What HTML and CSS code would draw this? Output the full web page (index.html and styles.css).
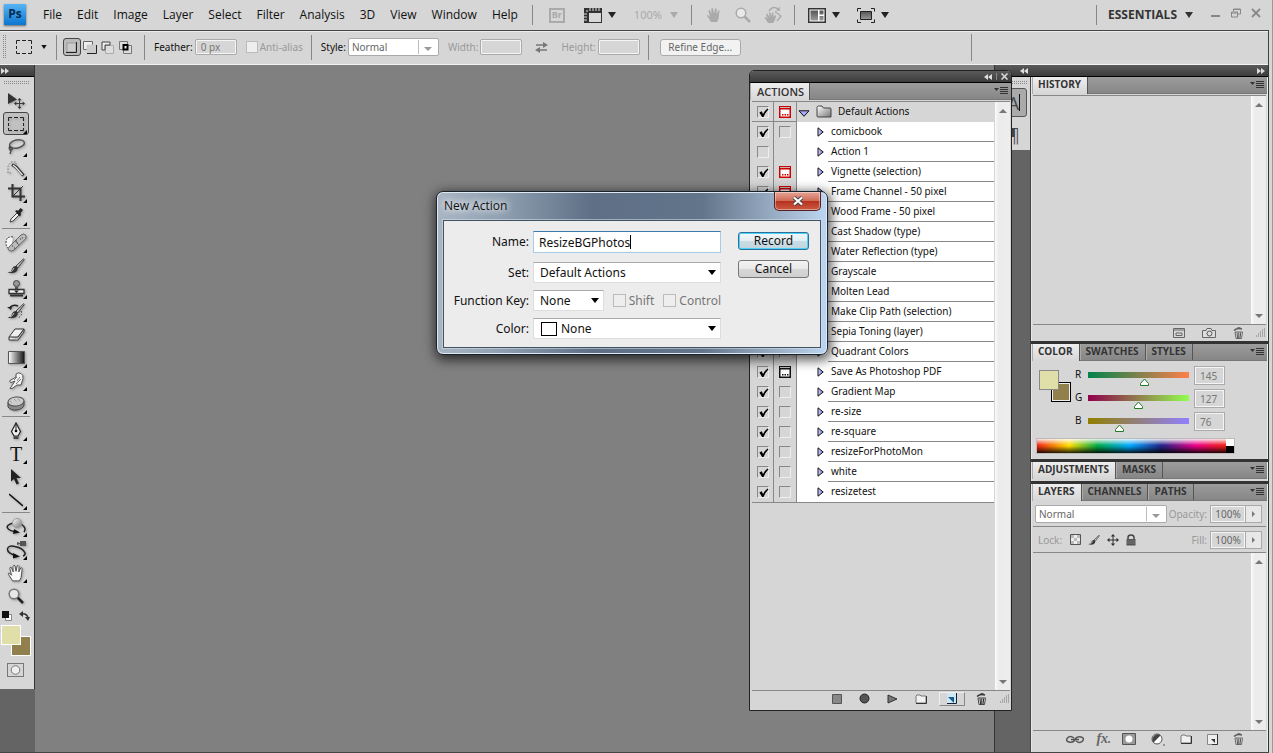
FILE: index.html
```html
<!DOCTYPE html>
<html lang="en">
<head>
<meta charset="utf-8">
<title>Photoshop - New Action</title>
<link rel="stylesheet" href="styles.css">
</head>
<body>
<svg class="defs" aria-hidden="true">
<defs>
<linearGradient id="metal" x1="0" y1="0" x2="1" y2="1"><stop offset="0" stop-color="#fff"/><stop offset="1" stop-color="#777"/></linearGradient>
<linearGradient id="dark" x1="0" y1="0" x2="0" y2="1"><stop offset="0" stop-color="#555"/><stop offset="1" stop-color="#999"/></linearGradient>
<linearGradient id="ramp"><stop offset="0" stop-color="#fff"/><stop offset="1" stop-color="#111"/></linearGradient>
<linearGradient id="violet" x1="0" y1="0" x2="1" y2="0"><stop offset="0" stop-color="#d8d8ff"/><stop offset="1" stop-color="#7070e0"/></linearGradient>
</defs>
<symbol id="caret" viewBox="0 0 8 6"><path d="M0 0h8L4 6z" fill="currentColor"/></symbol>
<symbol id="left2" viewBox="0 0 8 6"><path d="M4 0v6L0 3zM8 0v6L4 3z" fill="#ddd"/></symbol>
<symbol id="right2" viewBox="0 0 8 6"><path d="M0 0v6l4-3zM4 0v6l4-3z" fill="#ddd"/></symbol>
<symbol id="menu" viewBox="0 0 14 8"><path d="M0 1h5L2.500 4z" fill="#333"/><path d="M6 .5h8M6 2.500h8M6 4.500h8M6 6.500h8" stroke="#333"/></symbol>
<symbol id="marquee" viewBox="0 0 16 14"><path d="M.5 4V.5H4M6 .5h4M12 .5h3.500V4M15.500 6v3M15.500 11v2.500H12M10 13.500H6M4 13.500H.5V11M.5 9V6" fill="none" stroke="#222"/></symbol>
<symbol id="check" viewBox="0 0 12 12"><path d="M1.500 6l2.500-1.500 1.500 3Q7 4 10.500 1.500l1 1Q8 6 6 11H4.500z" fill="#000"/></symbol>
<symbol id="dlg" viewBox="0 0 12 12"><path d="M.75.75h10.500v10.500H.75z" fill="#fff" stroke="currentColor" stroke-width="1.500"/><path d="M0 0h12v3.500H0z" fill="currentColor"/><path d="M1 1.500h10" stroke="#bbb"/><path d="M3 8h1.500v1.500H3zM5.500 8H7v1.500H5.500zM8 8h1.500v1.500H8z" fill="currentColor"/></symbol>
<symbol id="tri" viewBox="0 0 7 10"><path d="M1 .8v8.400L6.200 5z" fill="url(#violet)" stroke="#111" stroke-width="1"/></symbol>
<symbol id="tridown" viewBox="0 0 12 7"><path d="M1 .8h10L6 6.300z" fill="#a8a8f8" stroke="#111"/></symbol>
<symbol id="folder" viewBox="0 0 16 13"><path d="M1 11V2.500Q1 1 2.500 1H6l1.500 2H14q1 0 1 1v8H2q-1 0-1-1z" fill="url(#metal)" stroke="#444"/></symbol>
<symbol id="folder2" viewBox="0 0 12 10"><path d="M1 9V2l1-1h3l1 1h5v7z" fill="#f1f1f1" stroke="#777"/><path d="M11.500 2v7.500H1" fill="none" stroke="#333"/></symbol>
<symbol id="bin" viewBox="0 0 11 12"><path d="M1 3.500q3-3 8-1.500" fill="none" stroke="#333" stroke-width="1.500"/><path d="M3 2l2-1.500h2.500" fill="none" stroke="#555"/><path d="M2 5h7.500l-1 6.500H3z" fill="#eee" stroke="#444"/><path d="M4 5.500l.5 5.500M5.800 5.500V11M7.700 5.500L7 11" stroke="#222"/></symbol>
<symbol id="page" viewBox="0 0 11 11"><path d="M.5.5h10v10h-10z" fill="#eee" stroke="#888"/><path d="M10.500 0v10.500H5" fill="none" stroke="#333"/><path d="M4 5h4v4z" fill="#333"/></symbol>
<symbol id="hand" viewBox="0 0 16 16"><path d="M5 15L1.500 9.500Q.5 8 2 8l2 2-1.500-6Q2.500 2.500 3.800 3L5.500 7 5.300 2Q6 .5 7 1.500L8 6.500 9 1.800Q10 .5 10.700 2L10.500 7l1.700-3.500q1.300-.7 1.300.8L12.500 12 11 15z" fill="currentColor"/></symbol>
<symbol id="lens" viewBox="0 0 16 16"><circle cx="6" cy="6" r="4.800" fill="#fff" fill-opacity=".45" stroke="currentColor" stroke-width="1.500"/><path d="M9.500 9.500L15 15" stroke="currentColor" stroke-width="2.500"/></symbol>
<symbol id="brush" viewBox="0 0 18 16"><path d="M16.500.8L9 8l1.800 2L17.300 1.500z" fill="#bbb" stroke="#333" stroke-width=".9"/><path d="M9 8q-3 0-4 3-1 3-4.500 3.500Q6 16 9 14q2-1.700 1.800-4z" fill="#333"/><path d="M3 14q3-1 4-4" stroke="#ccc" fill="none"/></symbol>
<symbol id="grip" viewBox="0 0 10 10"><path d="M9 0h1M7 2h1M9 2h1M5 4h1M7 4h1M9 4h1M3 6h1M5 6h1M7 6h1M9 6h1M1 8h1M3 8h1M5 8h1M7 8h1M9 8h1" stroke="#777" stroke-width="1.200"/></symbol>
<symbol id="up" viewBox="0 0 8 4"><path d="M0 4h8L4 0z" fill="#777"/></symbol>
<symbol id="down" viewBox="0 0 8 4"><path d="M0 0h8L4 4z" fill="#777"/></symbol>
<symbol id="cross" viewBox="0 0 12 12"><path d="M6 1v10M1 6h10" stroke="#333"/><path d="M6 0l2.200 2.500H3.800zM6 12l2.200-2.500H3.800zM0 6l2.500-2.200v4.400zM12 6L9.500 3.800v4.400z" fill="#333"/></symbol>
</svg>

<div class="app">
<header class="menubar">
  <span class="logo">Ps</span>
  <nav class="menus"><button>File</button><button>Edit</button><button>Image</button><button>Layer</button><button>Select</button><button>Filter</button><button>Analysis</button><button>3D</button><button>View</button><button>Window</button><button>Help</button></nav>
  <div class="vsep"></div>
  <button class="bridge" disabled>Br</button>
  <button class="drop" aria-label="View extras"><svg width="18" height="15" viewBox="0 0 18 15"><path d="M0 0h18v15H0z" fill="#333"/><path d="M5 5h12v9H5z" fill="#d8d8d8"/><path d="M3 2v2M6 0v3M9 0v3M12 0v3M15 0v3M0 6h3M0 9h3M0 12h3" stroke="#ddd"/></svg><svg class="caret"><use href="#caret"/></svg></button>
  <button class="drop zoomlevel" disabled>100%<svg class="caret"><use href="#caret"/></svg></button>
  <div class="vsep"></div>
  <div class="faded"><svg class="i16"><use href="#hand"/></svg><svg class="i16"><use href="#lens"/></svg><svg width="18" height="18" viewBox="0 0 18 18"><path d="M4 17L.5 11.500l1-.8 2 2L2 8l1.200-.5L5.500 11 5 6.500l1.200-.3L7.500 10l.7-3.500 1.300.2L9.500 11l1.700-2 1 .8L10.500 15 9 17z" fill="#aaa"/><path d="M11 5.500L17 10l-4 5" fill="none" stroke="#aaa" stroke-width="1.300"/><path d="M5 5Q9-1 14 3" fill="none" stroke="#aaa" stroke-width="1.500"/><path d="M12 4.500l4 .5-.5-4.500z" fill="#aaa"/></svg></div>
  <div class="vsep"></div>
  <button class="drop" aria-label="Arrange documents"><svg width="18" height="15" viewBox="0 0 18 15"><path d="M.75.750h16.500v13.500H.75z" fill="#fff" stroke="#333" stroke-width="1.500"/><path d="M2.500 2.500H10v10H2.500zM11.500 2.500h4v4h-4zM11.500 8h4v4.500h-4z" fill="url(#dark)"/></svg><svg class="caret"><use href="#caret"/></svg></button>
  <button class="drop screen" aria-label="Screen mode"><svg width="18" height="15" viewBox="0 0 18 15"><path d="M.5 3.500v-3H4M14 .5h3.500v3M17.500 11.500v3H14M4 14.500H.5v-3" fill="none" stroke="#222"/><path d="M3.500 3.500h11v8h-11z" fill="url(#dark)" stroke="#222"/></svg><svg class="caret"><use href="#caret"/></svg></button>
  <div class="grow"></div>
  <div class="vsep"></div>
  <button class="drop essentials">ESSENTIALS<svg class="caret"><use href="#caret"/></svg></button>
  <div class="winbtns"><button aria-label="Minimize"><svg width="10" height="10" viewBox="0 0 10 10"><path d="M0 8h9" stroke="#888" stroke-width="2"/></svg></button><button aria-label="Restore"><svg width="10" height="10" viewBox="0 0 10 10"><path d="M2.500 3V1h7v5H7M.5 4h6v5h-6zM.5 5h6M2.500 1.500h7" fill="none" stroke="#888"/></svg></button><button aria-label="Close"><svg width="10" height="10" viewBox="0 0 10 10"><path d="M1 1l8 8M9 1L1 9" stroke="#888" stroke-width="1.800"/></svg></button></div>
</header>

<div class="options">
  <span class="vgrip"></span>
  <button class="toolpick" aria-label="Marquee presets"><svg width="16" height="14"><use href="#marquee"/></svg><svg width="6" height="4"><use href="#caret"/></svg></button>
  <div class="osep"></div>
  <div class="modes">
    <button class="on" aria-label="New selection"><svg width="12" height="11" viewBox="0 0 12 11"><path d="M1 1h9v9H1z" fill="#ccc" stroke="#999"/><path d="M10.500 0v10.500H0" fill="none" stroke="#222"/></svg></button>
    <button aria-label="Add"><svg width="14" height="13" viewBox="0 0 14 13"><path d="M.5.5h9v8h-9z" fill="#eee" stroke="#666"/><path d="M4 4h9v8H4z" fill="#ccc" stroke="#ccc"/><path d="M13.500 4v8.500H4" fill="none" stroke="#222"/></svg></button>
    <button aria-label="Subtract"><svg width="14" height="13" viewBox="0 0 14 13"><path d="M4.500 4.500h8v8h-8z" fill="#ddd" stroke="#aaa"/><path d="M1 9V1h8v3H4v5z" fill="#eee" stroke="#444"/></svg></button>
    <button aria-label="Intersect"><svg width="14" height="13" viewBox="0 0 14 13"><path d="M.5.5h8v8h-8zM4.500 4.500h8v8h-8z" fill="#ddd" stroke="#777"/><path d="M4.500 4h4v4.500h-4z" fill="#eee" stroke="#000" stroke-width="2"/></svg></button>
  </div>
  <div class="osep"></div>
  <label class="field feather">Feather:<input type="text" value="0 px"></label>
  <label class="field off anti"><input type="checkbox" disabled>Anti-alias</label>
  <div class="osep"></div>
  <label class="field style">Style:<select class="pssel"><option>Normal</option></select></label>
  <label class="field off">Width:<input type="text" disabled></label>
  <svg class="swap" width="13" height="11" viewBox="0 0 13 11"><path d="M1 3h10M2 8h10" stroke="#777" stroke-width="1.500"/><path d="M8 0l5 3-5 3zM5 5L0 8l5 3z" fill="#777"/></svg>
  <label class="field off">Height:<input type="text" disabled></label>
  <div class="osep"></div>
  <button class="refine">Refine Edge...</button>
  <div class="grow"></div>
  <div class="osep last"></div>
</div>

<main class="work">
<aside class="tools">
  <div class="darkbar"><svg width="8" height="6"><use href="#right2"/></svg></div>
  <div class="dots"></div>
  <button class="tool plain" aria-label="Move"><svg width="20" height="18" viewBox="0 0 20 18"><path d="M2 1v11l9-4.500z" fill="#333"/><use href="#cross" x="8" y="6" width="11" height="11"/></svg></button>
  <button class="tool on" aria-label="Marquee"><svg width="16" height="14"><use href="#marquee"/></svg></button>
  <button class="tool" aria-label="Lasso"><svg width="18" height="16" viewBox="0 0 18 16"><ellipse cx="10" cy="5" rx="7.500" ry="4" fill="none" stroke="#555" stroke-width="1.500" transform="rotate(-12 10 5)"/><path d="M3 7q-2 3 1 4 3-1 0-2.500Q1 9 4 12l-1 3" fill="none" stroke="#444" stroke-width="1.300"/></svg></button>
  <button class="tool" aria-label="Quick selection"><svg width="18" height="17" viewBox="0 0 18 17"><path d="M4 12H1V5l3-4h5v3" fill="none" stroke="#777" stroke-dasharray="1.500 1.500"/><path d="M5 3.500l4 2.500 7.500 8.500" fill="none" stroke="#333" stroke-width="3"/><path d="M6 4l3 2.500 6.500 7.500" fill="none" stroke="#eee" stroke-width="1.200"/></svg></button>
  <button class="tool" aria-label="Crop"><svg width="17" height="17" viewBox="0 0 17 17"><path d="M4.500 0v12.500H17M0 4.500h12.500V17" fill="none" stroke="#333" stroke-width="2"/><path d="M5 12L15 2" stroke="#333"/></svg></button>
  <button class="tool" aria-label="Eyedropper"><svg width="16" height="17" viewBox="0 0 16 17"><path d="M2 15l1-3 6-6 2 2-6 6z" fill="#eee" stroke="#444"/><path d="M7 4l2-1 1 1 2.500-3 2.500 2-2.500 3 .5 1.500-1 2z" fill="#222"/></svg></button>
  <hr>
  <button class="tool" aria-label="Healing brush"><svg width="22" height="20" viewBox="0 0 22 20"><path d="M8 4Q1 3 1 10q0 5 5 7" fill="#f5f5f5" stroke="#222" stroke-dasharray="1.500 1.500"/><path d="M4 14L16 2q3-2 4.500 0t0 4L9 17q-3 2-5 .5T4 14z" fill="#bbb" stroke="#666"/><path d="M10 8l4 4" stroke="#777"/><path d="M7 13h1M9 15h1M12 10h1M15 6h1M17 5h1M11 8h1" stroke="#333"/></svg></button>
  <button class="tool" aria-label="Brush"><svg width="18" height="16"><use href="#brush"/></svg></button>
  <button class="tool" aria-label="Clone stamp"><svg width="17" height="17" viewBox="0 0 17 17"><circle cx="8.500" cy="3.500" r="3" fill="#999" stroke="#444"/><path d="M7 7h3v3H7z" fill="#555"/><path d="M1 9.500h15v4H1z" fill="#eee" stroke="#333" stroke-width="1.300"/><path d="M6 10.500h5l-2.500 2.500z" fill="#222"/><path d="M2 15.500h13" stroke="#333" stroke-width="2"/></svg></button>
  <button class="tool" aria-label="History brush"><svg width="18" height="17" viewBox="0 0 18 17"><use href="#brush" width="18" height="16"/><path d="M3 4q4-3 8-1" fill="none" stroke="#222" stroke-width="1.500"/><path d="M0 4h5l-1 3z" fill="#222"/><path d="M14 8q2 4-3 7" stroke="#222" stroke-dasharray="1.500 1.500" fill="none"/></svg></button>
  <button class="tool" aria-label="Eraser"><svg width="17" height="13" viewBox="0 0 17 13"><path d="M1 9l6-8h9l-6 8v3H1z" fill="#eee" stroke="#333"/><path d="M1 9h9l6-8v3l-6 8" fill="#bbb" stroke="#333"/></svg></button>
  <button class="tool" aria-label="Gradient"><svg width="17" height="13" viewBox="0 0 17 13"><path d="M.5.5h16v12H.5z" fill="url(#ramp)" stroke="#555"/></svg></button>
  <button class="tool" aria-label="Smudge"><svg width="16" height="18" viewBox="0 0 16 18"><path d="M2 16.500L7 9 3 10.500Q1 10 2 8.500L8 5V2q2-2 5-.5 2.500 1 2 5L13 13H9L4 16.500z" fill="#f2f2f2" stroke="#555"/><path d="M9 9l3-4M8 12l5-5M6 8l3-3" stroke="#777"/></svg></button>
  <button class="tool" aria-label="Sponge"><svg width="18" height="16" viewBox="0 0 18 16"><path d="M1 6v5q3 4 9 3 6-1 7-5V5z" fill="#888" stroke="#444"/><ellipse cx="9" cy="5.500" rx="8" ry="4.500" fill="#ccc" stroke="#555" transform="rotate(-6 9 5.500)"/><path d="M3 5l2 2M7 3l3 3M11 3l3 3M3 11l9 1" stroke="#888" stroke-dasharray="1 1"/></svg></button>
  <hr>
  <button class="tool" aria-label="Pen"><svg width="12" height="18" viewBox="0 0 12 18"><path d="M6 1L1.500 9.500 4 14h4l2.500-4.500z" fill="#eee" stroke="#222" stroke-width="1.200"/><path d="M6 1v8" stroke="#222"/><circle cx="6" cy="9" r="1.300"/><path d="M3.500 14.500h5V17h-5z" fill="#444"/></svg></button>
  <button class="tool type" aria-label="Type">T</button>
  <button class="tool" aria-label="Path selection"><svg width="12" height="16" viewBox="0 0 12 16"><path d="M1 0v12.500l3-2.500 2.500 5.500 2.500-1L6.500 9H11z" fill="#222"/></svg></button>
  <button class="tool" aria-label="Line"><svg width="14" height="14" viewBox="0 0 14 14"><path d="M0 1l14 12" stroke="#111" stroke-width="1.500"/></svg></button>
  <hr>
  <button class="tool" aria-label="3D rotate"><svg width="20" height="18" viewBox="0 0 20 18"><path d="M7 5Q0 7 1.500 10T11 14M15 6q6 4 3 8" fill="none" stroke="#222" stroke-width="1.500"/><path d="M8 11l6 3.500-7 1.500z" fill="#111"/><circle cx="11" cy="5" r="4.500" fill="url(#metal)" stroke="#999"/></svg></button>
  <button class="tool" aria-label="3D orbit"><svg width="20" height="18" viewBox="0 0 20 18"><path d="M11 15Q1 12 1.500 8T9 5.500Q17 7 19 12q.5 2-2 3" fill="none" stroke="#222" stroke-width="1.500"/><path d="M7 12l7 3.500-7 2z" fill="#111"/><path d="M11 1l3 1V0h6v5h-6V3l-3 1z" fill="#555"/></svg></button>
  <button class="tool" aria-label="Hand"><svg width="18" height="18" viewBox="0 0 16 16"><path d="M5 15L1.500 9.500Q.5 8 2 8l2 2-1.500-6Q2.500 2.500 3.800 3L5.500 7 5.300 2Q6 .5 7 1.500L8 6.500 9 1.800Q10 .5 10.700 2L10.500 7l1.700-3.500q1.300-.7 1.300.8L12.500 12 11 15z" fill="#f8f8f8" stroke="#444" stroke-width=".8"/></svg></button>
  <button class="tool plain" aria-label="Zoom"><svg width="16" height="16" viewBox="0 0 16 16"><path d="M9.500 9.500L15 15" stroke="#222" stroke-width="2.500"/><circle cx="6" cy="6" r="4.800" fill="#e8e8e8" stroke="#777" stroke-width="1.500"/></svg></button>
  <div class="mini"><svg width="10" height="10" viewBox="0 0 10 10"><path d="M3.500 3.500h6v6h-6z" fill="#fff" stroke="#888"/><path d="M0 0h7v7H0z" fill="#111"/></svg><svg width="11" height="10" viewBox="0 0 11 10"><path d="M2 3q6-1 7 4" fill="none" stroke="#333" stroke-width="1.500"/><path d="M0 3l4-3v6zM6 6h5l-2 4z" fill="#333"/></svg></div>
  <div class="swatches"><i class="fg"></i><i class="bg"></i></div>
  <button class="quick" aria-label="Quick mask"><svg width="15" height="12" viewBox="0 0 15 12"><circle cx="7.500" cy="6" r="4.300" fill="#eee" stroke="#777"/></svg></button>
</aside>

<section class="canvas"></section>

<aside class="dock">
  <div class="darkbar"><svg class="dl" width="8" height="6"><use href="#left2"/></svg><svg width="8" height="6"><use href="#right2"/></svg></div>
  <div class="dockrow">
    <div class="iconcol"><div class="icons"><div class="dots"></div><button class="on" aria-label="Character">A<span></span></button><button aria-label="Paragraph">¶</button></div></div>
    <div class="panels">
      <section class="panel history">
        <div class="tabs"><button class="active">HISTORY</button><span class="pm"><svg><use href="#menu"/></svg></span></div>
        <div class="well"><div class="void"></div><div class="sb"><svg><use href="#up"/></svg><svg><use href="#down"/></svg></div></div>
        <div class="foot"><svg width="12" height="11" viewBox="0 0 12 11"><path d="M.5.5h11v9H.5zM0 2h12M3 5h6v2.500H3z" fill="none" stroke="#666"/></svg><svg width="14" height="11" viewBox="0 0 14 11"><path d="M.5 2.500H4l1-2h4l1 2h3.500v7H.5z" fill="#ddd" stroke="#666"/><circle cx="7.500" cy="5.500" r="2.500" fill="none" stroke="#555"/></svg><svg class="fb"><use href="#bin"/></svg><svg class="grip"><use href="#grip"/></svg></div>
      </section>
      <section class="panel">
        <div class="tabs"><button class="active">COLOR</button><button>SWATCHES</button><button>STYLES</button><span class="pm"><svg><use href="#menu"/></svg></span></div>
        <div class="color">
          <div class="pair"><i class="fg"></i><i class="bg"></i></div>
          <div class="sliders">
            <label for="red">R</label><input id="red" class="r" type="range" min="0" max="255" value="145"><input class="num" type="text" value="145" aria-label="Red value">
            <label for="green">G</label><input id="green" class="g" type="range" min="0" max="255" value="127"><input class="num" type="text" value="127" aria-label="Green value">
            <label for="blue">B</label><input id="blue" class="b" type="range" min="0" max="255" value="76"><input class="num" type="text" value="76" aria-label="Blue value">
          </div>
          <div class="spectrum"><i class="hue"></i><i class="bw"></i></div>
        </div>
      </section>
      <section class="panel adjust">
        <div class="tabs"><button class="active">ADJUSTMENTS</button><button>MASKS</button><span class="pm"><svg><use href="#menu"/></svg></span></div>
      </section>
      <section class="panel layers">
        <div class="tabs"><button class="active">LAYERS</button><button>CHANNELS</button><button>PATHS</button><span class="pm"><svg><use href="#menu"/></svg></span></div>
        <div class="lrow"><select class="pssel" aria-label="Blend mode"><option>Normal</option></select><label class="pct">Opacity:<input type="text" value="100%"></label><button class="step" aria-label="Opacity slider"></button></div>
        <div class="lrow"><span>Lock:</span><svg width="11" height="11" viewBox="0 0 11 11"><path d="M.5.5h10v10H.5z" fill="#eee" stroke="#555"/><path d="M1 1h3v3H1zM7 1h3v3H7zM4 4h3v3H4zM1 7h3v3H1zM7 7h3v3H7z" fill="#bbb"/></svg><svg width="12" height="12" viewBox="0 0 18 16"><use href="#brush"/></svg><svg width="12" height="12"><use href="#cross"/></svg><svg width="10" height="12" viewBox="0 0 10 12"><path d="M2 5V3.500q0-2.500 3-2.500t3 2.500V5" fill="none" stroke="#444" stroke-width="1.500"/><path d="M.5 5h9v6.500h-9z" fill="#555"/><path d="M1 7h8M1 9h8" stroke="#777"/></svg><label class="pct">Fill:<input type="text" value="100%"></label><button class="step" aria-label="Fill slider"></button></div>
        <div class="well"><div class="void"></div><div class="sb"><svg><use href="#up"/></svg><svg><use href="#down"/></svg></div></div>
        <div class="foot tall"><svg width="18" height="9" viewBox="0 0 18 9"><path d="M8 3Q4 0 1.500 3T3 7t6-2M10 6q4 3 6.500 0T15 2 9 4M5 4.500h8" fill="none" stroke="#555" stroke-width="1.500"/></svg><span class="fx">fx<small>.</small></span><svg width="14" height="12" viewBox="0 0 14 12"><path d="M.5.5h13v11H.5z" fill="#999" stroke="#555"/><circle cx="7" cy="6" r="3.500" fill="#fff"/></svg><svg width="14" height="13" viewBox="0 0 14 13"><circle cx="6" cy="6" r="5" fill="#fff" stroke="#555"/><path d="M2.500 9.500A5 5 0 0 1 9.500 2.500z" fill="#444"/><path d="M12 12h2" stroke="#555"/></svg><svg class="fo"><use href="#folder2"/></svg><svg class="fp"><use href="#page"/></svg><svg class="fb"><use href="#bin"/></svg></div>
      </section>
    </div>
  </div>
</aside>
</main>
</div>

<section class="actions">
  <div class="darkbar"><svg width="8" height="6"><use href="#left2"/></svg><b></b><svg width="7" height="7" viewBox="0 0 7 7"><path d="M.5.5l6 6M6.500.5l-6 6" stroke="#ddd" stroke-width="1.500"/></svg></div>
  <div class="tabs"><button class="active">ACTIONS</button><span class="pm"><svg><use href="#menu"/></svg></span></div>
  <div class="awell">
    <ul class="list">
      <li class="set"><span class="c"><i><svg><use href="#check"/></svg></i></span><span class="c red"><svg><use href="#dlg"/></svg></span><span class="name"><svg class="td"><use href="#tridown"/></svg><svg class="fold"><use href="#folder"/></svg>Default Actions</span></li>
      <li><span class="c"><i><svg><use href="#check"/></svg></i></span><span class="c"><i></i></span><svg class="tr"><use href="#tri"/></svg><span class="name">comicbook</span></li>
      <li><span class="c"><i></i></span><span class="c"></span><svg class="tr"><use href="#tri"/></svg><span class="name">Action 1</span></li>
      <li><span class="c"><i><svg><use href="#check"/></svg></i></span><span class="c red"><svg><use href="#dlg"/></svg></span><svg class="tr"><use href="#tri"/></svg><span class="name">Vignette (selection)</span></li>
      <li><span class="c"><i><svg><use href="#check"/></svg></i></span><span class="c red"><svg><use href="#dlg"/></svg></span><svg class="tr"><use href="#tri"/></svg><span class="name">Frame Channel - 50 pixel</span></li>
      <li><span class="c"><i><svg><use href="#check"/></svg></i></span><span class="c"><i></i></span><svg class="tr"><use href="#tri"/></svg><span class="name">Wood Frame - 50 pixel</span></li>
      <li><span class="c"><i><svg><use href="#check"/></svg></i></span><span class="c"><i></i></span><svg class="tr"><use href="#tri"/></svg><span class="name">Cast Shadow (type)</span></li>
      <li><span class="c"><i><svg><use href="#check"/></svg></i></span><span class="c"><i></i></span><svg class="tr"><use href="#tri"/></svg><span class="name">Water Reflection (type)</span></li>
      <li><span class="c"><i><svg><use href="#check"/></svg></i></span><span class="c"><i></i></span><svg class="tr"><use href="#tri"/></svg><span class="name">Grayscale</span></li>
      <li><span class="c"><i><svg><use href="#check"/></svg></i></span><span class="c"><i></i></span><svg class="tr"><use href="#tri"/></svg><span class="name">Molten Lead</span></li>
      <li><span class="c"><i><svg><use href="#check"/></svg></i></span><span class="c"><i></i></span><svg class="tr"><use href="#tri"/></svg><span class="name">Make Clip Path (selection)</span></li>
      <li><span class="c"><i><svg><use href="#check"/></svg></i></span><span class="c"><i></i></span><svg class="tr"><use href="#tri"/></svg><span class="name">Sepia Toning (layer)</span></li>
      <li><span class="c"><i><svg><use href="#check"/></svg></i></span><span class="c"><i></i></span><svg class="tr"><use href="#tri"/></svg><span class="name">Quadrant Colors</span></li>
      <li><span class="c"><i><svg><use href="#check"/></svg></i></span><span class="c"><svg><use href="#dlg"/></svg></span><svg class="tr"><use href="#tri"/></svg><span class="name">Save As Photoshop PDF</span></li>
      <li><span class="c"><i><svg><use href="#check"/></svg></i></span><span class="c"><i></i></span><svg class="tr"><use href="#tri"/></svg><span class="name">Gradient Map</span></li>
      <li><span class="c"><i><svg><use href="#check"/></svg></i></span><span class="c"><i></i></span><svg class="tr"><use href="#tri"/></svg><span class="name">re-size</span></li>
      <li><span class="c"><i><svg><use href="#check"/></svg></i></span><span class="c"><i></i></span><svg class="tr"><use href="#tri"/></svg><span class="name">re-square</span></li>
      <li><span class="c"><i><svg><use href="#check"/></svg></i></span><span class="c"><i></i></span><svg class="tr"><use href="#tri"/></svg><span class="name">resizeForPhotoMon</span></li>
      <li><span class="c"><i><svg><use href="#check"/></svg></i></span><span class="c"><i></i></span><svg class="tr"><use href="#tri"/></svg><span class="name">white</span></li>
      <li><span class="c"><i><svg><use href="#check"/></svg></i></span><span class="c"><i></i></span><svg class="tr"><use href="#tri"/></svg><span class="name">resizetest</span></li>
    </ul>
    <div class="sb"><svg><use href="#up"/></svg><svg><use href="#down"/></svg></div>
  </div>
  <div class="afoot">
    <button aria-label="Stop"><svg width="10" height="10" viewBox="0 0 10 10"><path d="M.5.500h9v9h-9z" fill="#888" stroke="#555"/></svg></button>
    <button aria-label="Record"><svg width="11" height="11" viewBox="0 0 11 11"><circle cx="5.500" cy="5.500" r="4.500" fill="#555" stroke="#222"/></svg></button>
    <button aria-label="Play"><svg width="11" height="10" viewBox="0 0 11 10"><path d="M1 1v8l9-4z" fill="#777" stroke="#333"/></svg></button>
    <button aria-label="New set"><svg class="fo"><use href="#folder2"/></svg></button>
    <button class="raised" aria-label="New action"><svg width="10" height="11" viewBox="0 0 10 11"><path d="M0 0h10v11H0z" fill="#cfe6f4"/><path d="M9.500 0v10.500H0" fill="none" stroke="#123"/><path d="M1 4l6 0v6z" fill="#136090"/></svg></button>
    <button aria-label="Delete"><svg class="fb"><use href="#bin"/></svg></button>
    <svg class="grip"><use href="#grip"/></svg>
  </div>
</section>

<form class="dialog" role="dialog" aria-labelledby="dt">
  <div class="title"><span id="dt">New Action</span><button type="button" class="x" aria-label="Close"><svg width="12" height="10" viewBox="0 0 12 10"><path d="M2 1.500l8 7M10 1.500l-8 7" stroke="#444" stroke-width="4"/><path d="M2 1.500l8 7M10 1.500l-8 7" stroke="#fff" stroke-width="2.200"/></svg></button></div>
  <div class="dbody">
    <div class="grid">
      <label for="nm">Name:</label><div class="nm"><input id="nm" type="text" value="ResizeBGPhotos"><span class="beam"></span></div>
      <label for="st">Set:</label><select id="st"><option>Default Actions</option></select>
      <label for="fk">Function Key:</label><div class="keys"><select id="fk"><option>None</option></select><label><input type="checkbox" disabled>Shift</label><label><input type="checkbox" disabled>Control</label></div>
      <label for="cl">Color:</label><div class="colorsel"><select id="cl"><option>None</option></select><i></i></div>
    </div>
    <div class="btns"><button type="button" class="primary">Record</button><button type="button">Cancel</button></div>
  </div>
</form>
</body>
</html>
```
FILE: styles.css
```css
* { box-sizing: border-box; }
html, body { height: 100%; margin: 0; overflow: hidden; }
body { background: #d6d6d6; color: #111; font: 10px/14px "Noto Sans", Tahoma, sans-serif; position: relative; }
button, input, select { font: inherit; color: inherit; margin: 0; padding: 0; border: 0; background: none; border-radius: 0; appearance: none; }
svg { display: block; flex: none; }
i { display: block; flex: none; }
.defs { position: absolute; width: 0; height: 0; }
.i16 { width: 16px; height: 16px; }
.grow { flex: 1; }
.app { display: flex; flex-direction: column; height: 100%; border-right: 1px solid #999; padding-right: 3px; }

/* menu bar */
.menubar { display: flex; align-items: center; height: 30px; flex: none; padding-left: 4px; }
.logo { width: 22px; height: 21px; background: linear-gradient(#58b4f4, #0a76d0); box-shadow: 0 1px 2px #666; color: #052a4e; font: bold 12px/20px "Open Sans", sans-serif; text-align: center; margin: 0 17px 2px 0; }
.menus { display: flex; gap: 15px; font: 12px/16px "Open Sans", sans-serif; margin-right: 14px; }
.vsep { width: 1px; height: 20px; background: #888; flex: none; }
.caret { width: 8px; height: 6px; }
.drop { display: flex; align-items: center; gap: 6px; color: #222; }
.bridge { width: 16px; height: 15px; border: 2px solid #aaa; color: #aaa; font: bold 9px/10px "Open Sans", sans-serif; margin: 0 19px 0 16px; }
.zoomlevel { color: #aaa; gap: 8px; font-size: 11px; margin: 0 13px 0 18px; }
.faded { display: flex; align-items: center; gap: 13px; color: #aaa; padding: 0 12px 0 14px; }
.faded + .vsep + .drop { margin-left: 13px; }
.screen { margin-left: 17px; }
.essentials { font: 700 12px/16px "Open Sans", sans-serif; color: #333; gap: 8px; margin-left: 11px; }
.winbtns { display: flex; gap: 10px; padding: 0 8px 4px 18px; }

/* options bar */
.options { display: flex; align-items: center; height: 35px; flex: none; border: 1px solid #444; border-width: 1px 1px 0 0; box-shadow: inset 0 1px #eee, inset 0 -1px #f2f2f2; padding: 0 0 2px 2px; }
.vgrip { width: 4px; height: 24px; background: conic-gradient(#888 25%, transparent 0) 0 0 / 2px 2px; margin-right: 10px; }
.toolpick { display: flex; align-items: center; gap: 9px; margin-right: 9px; }
.osep { width: 1px; height: 25px; background: #888; flex: none; }
.modes { display: flex; align-items: center; gap: 4px; padding: 0 11px 0 6px; }
.modes .on { width: 18px; height: 18px; border: 1px solid #444; border-radius: 3px; background: #bbb; display: grid; place-items: center; margin-right: -2px; }
.field { display: flex; align-items: center; gap: 2px; margin-left: 9px; white-space: nowrap; }
.field input[type=text] { width: 42px; height: 16px; border: 1px solid #aaa; box-shadow: inset 0 0 0 1px #f5f5f5; border-radius: 2px; padding-left: 5px; color: #777; }
.off { color: #999; }
input[type=checkbox] { width: 12px; height: 12px; border: 1px solid #bbb; background: #eee; }
.pssel { width: 91px; height: 18px; border: 1px solid #aaa; border-radius: 2px; color: #666; padding-left: 3px; background: url("data:image/svg+xml,%3Csvg xmlns='http://www.w3.org/2000/svg' width='20' height='16'%3E%3Cpath d='M.5 1v14' stroke='%23bbb'/%3E%3Cpath d='M6 8h8l-4 4z' fill='%23999'/%3E%3C/svg%3E") right center no-repeat #fff; }
.swap { margin: 0 4px 0 13px; }
.options .off + .osep { margin-left: 8px; }
.refine { width: 81px; height: 17px; border: 1px solid #aaa; border-radius: 3px; background: #f2f2f2; color: #666; margin-left: 11px; line-height: 14px; }
.last { margin-right: 296px; height: 27px; }

/* workspace */
.work { display: flex; flex: 1; min-height: 0; border-bottom: 1px solid #444; background: #646464; }
.canvas { flex: 1; background: #808080; }
.darkbar { height: 12px; flex: none; background: linear-gradient(#5a5a5a, #3c3c3c); border-bottom: 1px solid #000; display: flex; align-items: center; justify-content: space-between; padding: 0 3px; }
.dots { height: 4px; flex: none; background: conic-gradient(#888 25%, transparent 0) 0 0 / 2px 2px; }

.tools { width: 35px; border-right: 1px solid #333; flex: none; align-self: flex-start; background: #d6d6d6; height: 624px; display: flex; flex-direction: column; }
.tools .darkbar { padding: 0 1px; }
.tools > .dots { margin: 4px 4px 4px 3px; }
.tool { position: relative; height: 23px; flex: none; display: grid; place-items: center; width: 32px; }
.tool svg { filter: drop-shadow(1px 1px 1px #0004); }
.tool:not(.plain)::after { content: ""; position: absolute; right: 5px; bottom: 1px; border: 2px solid; border-color: transparent #000 #000 transparent; }
.tool.on { width: 26px; margin-left: 3px; border: 1px solid #444; border-radius: 3px; background: #c0c0c0; }
.tool.on::after { right: 1px; bottom: 0; }
.type { font: 20px/22px "Liberation Serif", serif; }
.tools hr { width: 28px; height: 1px; border: 0; background: #888; margin: 1px 2px 2px; flex: none; }
.mini { display: flex; gap: 7px; padding: 4px 2px; }
.swatches, .pair { display: grid; }
.swatches i, .pair i { grid-area: 1 / 1; width: 20px; height: 20px; border: 1px solid #fff; }
.swatches { width: 30px; height: 31px; margin-left: 1px; }
.fg { background: #e0dfa9; z-index: 1; }
.bg { background: #917f4c; align-self: end; justify-self: end; }
.quick { width: 17px; height: 14px; border: 1px solid #777; margin: 7px 0 0 7px; flex: none; }

/* dock */
.dock { width: 275px; flex: none; display: flex; flex-direction: column; border-left: 1px solid #333; border-right: 1px solid #333; }
.dock > .darkbar { padding: 0 3px 0 25px; }
.dockrow { display: flex; flex: 1; min-height: 0; }
.iconcol { width: 36px; flex: none; border-right: 1px solid #444; }
.icons { background: #d6d6d6; height: 73px; padding: 4px 2px 0 6px; display: flex; flex-direction: column; }
.icons button { height: 29px; width: 26px; margin-top: 3px; font: 18px/26px "Open Sans", sans-serif; color: #444; flex: none; }
.icons .on { border: 1px solid #555; border-radius: 3px; background: #aaa; display: flex; justify-content: center; align-items: center; }
.icons .on span { width: 1px; height: 17px; background: #111; }
.panels { flex: 1; display: flex; flex-direction: column; gap: 3px; background: #333; min-width: 0; }
.panel { background: #d6d6d6; display: flex; flex-direction: column; border-left: 1px solid #e8e8e8; border-right: 1px solid #eee; flex: none; }
.tabs { display: flex; height: 17px; flex: none; background: linear-gradient(#9c9c9c, #868686); border-bottom: 1px solid #777; font: 700 10px/15px "Open Sans", sans-serif; color: #333; }
.tabs button { padding: 0 6px 1px 5px; border-right: 1px solid #555; border-left: 1px solid #aaa; }
.tabs .active { background: linear-gradient(#eee, #d6d6d6); height: 17px; padding-bottom: 2px; }
.pm { margin: 4px 3px 0 auto; }
.pm svg { width: 14px; height: 8px; }
.history { height: 264px; }
.well { display: flex; flex: 1; min-height: 0; border-bottom: 1px solid #888; margin: 1px 1px 0; border-top: 1px solid #888; }
.void { flex: 1; }
.sb { width: 15px; background: linear-gradient(90deg, #fafafa, #ebebeb 4px, #eee); display: flex; flex-direction: column; justify-content: space-between; align-items: center; padding: 7px 0 6px; flex: none; }
.sb svg { width: 8px; height: 4px; }
.foot { height: 16px; flex: none; display: flex; align-items: center; justify-content: flex-end; gap: 17px; padding-right: 2px; }
.fb { width: 11px; height: 12px; }
.fo { width: 12px; height: 10px; }
.fp { width: 11px; height: 11px; }
.foot .fb { opacity: .75; }
.grip { width: 10px; height: 10px; }
.foot .fb + .grip { margin-left: -6px; }
.color { height: 98px; padding: 5px 5px 0 7px; display: grid; grid-template-columns: 34px 1fr; column-gap: 2px; align-content: start; }
.pair { width: 32px; height: 32px; margin-top: 4px; }
.pair .fg { border: 1px solid #888; }
.pair .bg { border: 1px solid #000; box-shadow: inset 0 0 0 1px #eee; }
.sliders { display: grid; grid-template-columns: 8px 101px 31px; column-gap: 5px; row-gap: 4px; align-items: center; }
.sliders label { line-height: 16px; height: 19px; }
.num { height: 19px; border: 1px solid #aaa; box-shadow: inset 0 0 0 1px #f5f5f5; padding-left: 5px; color: #777; width: 31px; }
input[type=range] { width: 101px; height: 19px; background: linear-gradient(90deg, var(--a), var(--z)) 0 6px / 101px 6px no-repeat; display: block; }
.r { --a: #00844c; --z: #ff7f4c; }
.g { --a: #91004c; --z: #91ff4c; }
.b { --a: #917f00; --z: #917fff; }
input[type=range]::-webkit-slider-thumb { appearance: none; width: 9px; height: 8px; margin-top: 12px; background: url("data:image/svg+xml,%3Csvg xmlns='http://www.w3.org/2000/svg' width='9' height='8'%3E%3Cpath d='M4.500 1L8.500 5.500v2h-8v-2z' fill='%23fff' stroke='%23257a25'/%3E%3C/svg%3E"); }
.spectrum { grid-column: 1 / -1; display: flex; width: 199px; height: 16px; margin: 7px 0 0 -3px; border: 1px solid #bbb; }
.hue { flex: 1; background: linear-gradient(#fffd, #fff0 45%, #0000 50%, #000d), linear-gradient(90deg, #e21, #fd0 17%, #0a4 32%, #0af 49%, #228 66%, #e08 84%, #e21); }
.bw { width: 8px; background: linear-gradient(#fff 50%, #000 50%); }
.adjust { height: 19px; }
.layers { flex: 1; min-height: 0; }
.lrow { display: flex; align-items: center; height: 26px; flex: none; border-bottom: 1px solid #888; margin: 0 1px; padding: 0 4px 0 2px; color: #999; }
.layers .lrow .pssel { width: 132px; }
.pct { display: flex; align-items: center; gap: 3px; margin-left: auto; }
.pct input { width: 36px; height: 18px; border: 1px solid #aaa; box-shadow: inset 0 0 0 1px #f5f5f5; text-align: center; color: #666; }
.step { width: 16px; height: 18px; border: 1px solid #aaa; border-left: 0; background: #e8e8e8; display: grid; place-items: center; }
.step::before { content: ""; border: 3px solid transparent; border-left-color: #777; border-right: 0; }
.lrow span { margin: 0 8px 0 3px; }
.lrow > svg { margin-right: 7px; }
.layers .well { margin-top: 0; border-top: 0; }
.tall { height: 21px; gap: 15px; padding: 0 23px 5px 0; }
.fx { font: italic bold 14px/14px "Liberation Serif", serif; color: #666; margin: 0 -4px 0 -3px; }

/* floating actions panel */
.actions { position: absolute; left: 749px; top: 70px; width: 263px; height: 641px; background: #d6d6d6; border: 1px solid #222; border-radius: 5px 5px 0 0; display: flex; flex-direction: column; overflow: hidden; }
.actions .darkbar { justify-content: flex-end; gap: 4px; padding-right: 3px; }
.darkbar b { width: 1px; height: 7px; background: #888; }
.actions .tabs { font: 600 11px/15px "Open Sans", sans-serif; }
.actions .tabs .active { padding: 0 5px 1px 6px; }
.awell { display: flex; flex: 1; min-height: 0; margin: 1px 1px 0 2px; border-top: 1px solid #888; }
.list { flex: 1; align-self: flex-start; list-style: none; margin: 0; padding: 0; border-bottom: 1px solid #888; }
.list li { display: flex; height: 20px; background: #fff; }
.c { width: 22px; flex: none; background: #d6d6d6; border-right: 1px solid #888; display: grid; place-items: center; }
.c + .c { width: 23px; }
.c i { width: 12px; height: 12px; border: 1px solid; border-color: #888 #eee #eee #888; }
.c svg { width: 12px; height: 12px; }
.c i svg { width: 11px; height: 11px; }
.red { color: #c00; }
.tr { width: 7px; height: 10px; margin: 5px 4px 0 20px; }
.name { flex: 1; border-bottom: 1px solid #888; padding: 2px 0 0 3px; white-space: nowrap; }
.list li:last-child .name { border: 0; }
.set .name { display: flex; gap: 6px; background: #d6d6d6; border: 0; padding-left: 1px; }
.td { width: 12px; height: 7px; margin-top: 6px; }
.fold { width: 16px; height: 13px; margin-top: 1px; }
.set .c { border-bottom: 1px solid #888; }
.actions .awell .sb { margin-left: 1px; }
.afoot { display: flex; height: 20px; flex: none; border-top: 1px solid #888; margin: 0 1px 0 2px; padding: 0 1px 4px 0; align-items: center; justify-content: flex-end; gap: 17px; }
.raised { width: 26px; height: 14px; border: 1px solid; border-color: #eee #888 #888 #eee; display: grid; place-items: center; margin: 0 -6px 0 -5px; }
.afoot .grip { margin-left: -5px; }

/* new action dialog */
.dialog { position: absolute; left: 436px; top: 191px; width: 392px; height: 164px; border: 1px solid #1a232c; border-radius: 7px; padding: 0 6px 6px; display: flex; flex-direction: column; background: linear-gradient(90deg, #a9b5c3, #93a3b4 15%, #5e6f86 40%, #62758b 68%, #9db1c8 88%, #bcd6f2); box-shadow: inset 0 0 0 1px #dfe9f3, 1px 3px 12px 2px #000a; color: #111; font: 12px/16px "Noto Sans", Tahoma, sans-serif; }
.title { display: flex; justify-content: space-between; height: 28px; flex: none; padding-left: 1px; }
.title > span { padding-top: 6px; font: 12px/16px "Open Sans", sans-serif; text-shadow: 0 0 6px #fff, 0 0 10px #fff; }
.x { width: 47px; height: 19px; border: 1px solid #522; border-top: 0; border-radius: 0 0 5px 5px; background: linear-gradient(#e6a596, #cf6c5a 48%, #b5301d 50%, #cc5a44); box-shadow: inset 0 0 0 1px #fff6; display: grid; place-items: center; }
.dbody { flex: 1; background: #ececec; border: 1px solid #45525f; box-shadow: 0 0 0 1px #d5e2ee88; display: flex; gap: 17px; padding: 10px 0 0 9px; }
.grid { display: grid; grid-template-columns: 76px 188px; grid-template-rows: 24px; grid-auto-rows: 21px; gap: 7px 4px; align-content: start; align-items: center; }
.grid > label { text-align: right; white-space: nowrap; }
.grid > label:first-child { align-self: start; line-height: 22px; }
.grid input[type=text] { height: 22px; width: 188px; border: 1px solid #a9cbe6; border-top-color: #3d7bad; background: #fff; padding-left: 5px; outline: 0; }
.nm, .colorsel { display: grid; align-items: center; }
.nm { align-self: start; }
.nm > *, .colorsel > * { grid-area: 1 / 1; }
.beam { width: 1px; height: 14px; background: #000; margin-left: 97px; }
.grid select { width: 188px; height: 21px; border: 1px solid #ddd; border-top-color: #aaa; padding-left: 6px; background: url("data:image/svg+xml,%3Csvg xmlns='http://www.w3.org/2000/svg' width='12' height='5'%3E%3Cpath d='M0 0h8L4 5z'/%3E%3C/svg%3E") right center no-repeat #fff; }
.keys { display: flex; align-items: center; }
.keys label { display: flex; align-items: center; gap: 3px; color: #777; margin-left: 9px; }
.keys input { width: 13px; height: 13px; }
.grid .keys select { width: 73px; }
.grid .colorsel select { padding-left: 27px; }
.colorsel i { width: 16px; height: 14px; border: 1px solid #000; background: #fff; margin-left: 8px; }
.btns { display: flex; flex-direction: column; gap: 10px; padding-top: 1px; }
.btns button { width: 71px; height: 18px; border: 1px solid #777; border-radius: 3px; background: linear-gradient(#f3f3f3, #e9e9e9 50%, #d8d8d8 50%, #cfcfcf); line-height: 16px; }
.btns .primary { border-color: #2b6f9c; box-shadow: inset 0 0 0 1px #4fd0f5; background: linear-gradient(#f0f6f8, #e3edf1 50%, #cbdde5 50%, #c2d6df); }
```
